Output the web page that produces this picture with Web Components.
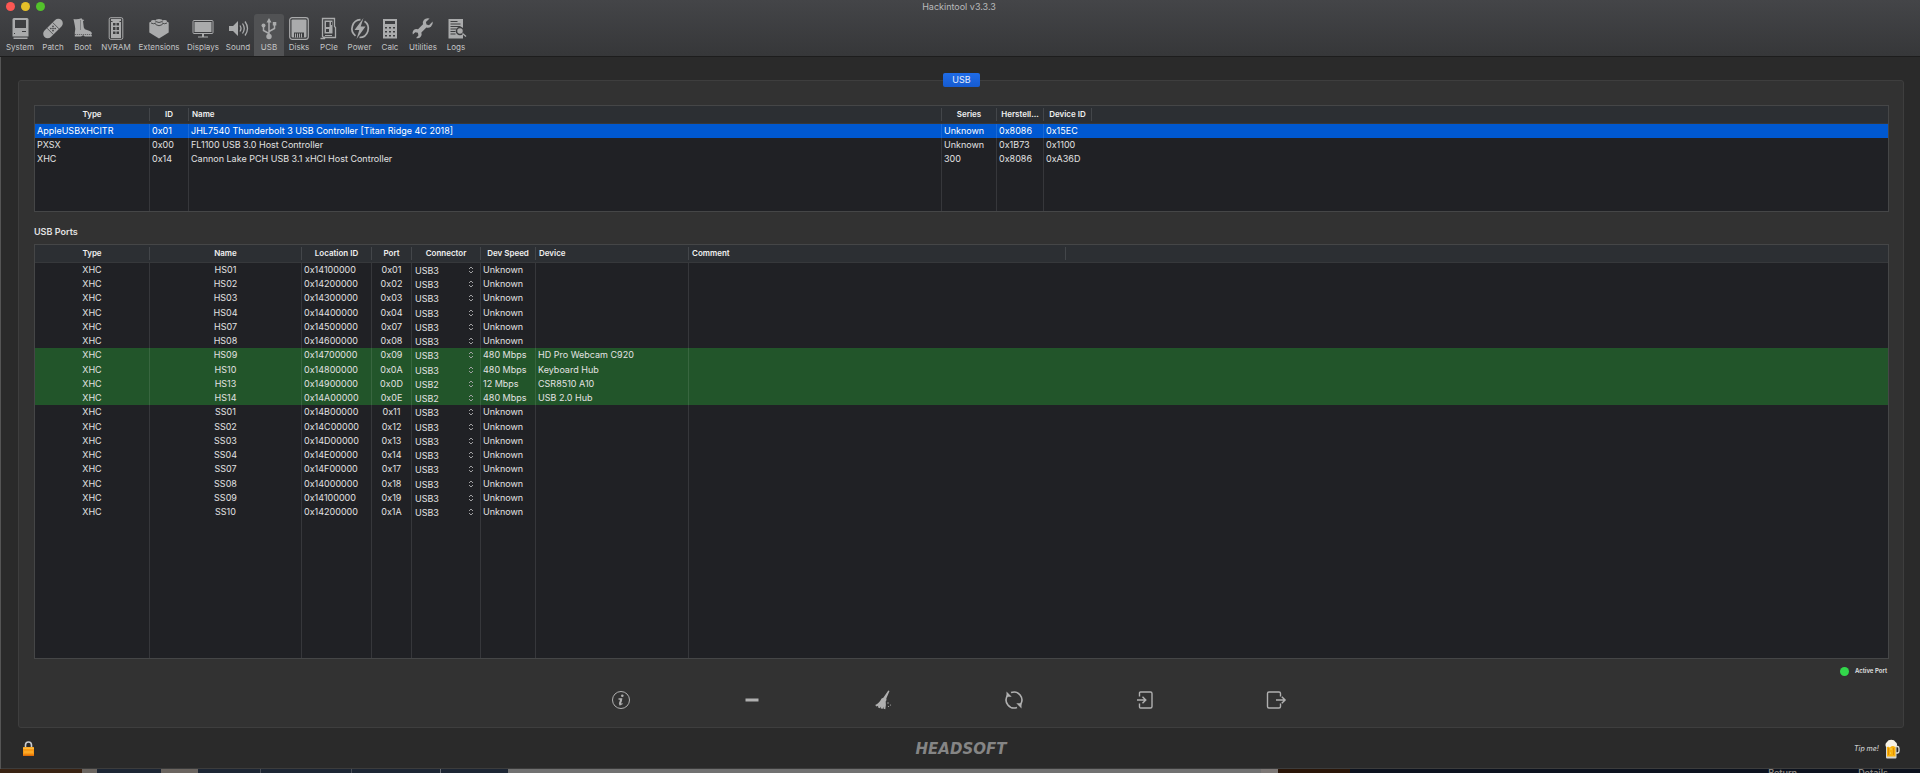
<!DOCTYPE html>
<html lang="en">
<head>
<meta charset="utf-8">
<title>Hackintool v3.3.3</title>
<style>
html, body { height: 100%; margin: 0; }
body {
  background: #0c121e;
  color: #e2e2e2;
  font: 9px/14px Inter, "Liberation Sans", sans-serif;
  overflow: hidden;
}
</style>
</head>
<body>
<hack-window></hack-window>
<script>
const ICONS = {
  system: `<path fill="currentColor" fill-rule="evenodd" d="M6 1h13q1.500 0 1.500 1.500V19.500h-16V2.500Q4.500 1 6 1zM7 3v8h11V3zM14 14v1h4v-1zM6 16v1h1v-1z"/><path fill="currentColor" d="M5.500 20.500h14v1.500h-14z"/>`,
  patch: `<g transform="rotate(-45 12 11.500)"><rect x="0" y="7" width="24" height="9" rx="4.500" fill="currentColor"/><path stroke="#3d3e40" stroke-width=".7" d="M8 7v9M16 7v9"/><g fill="#3d3e40"><circle cx="10.500" cy="10" r=".8"/><circle cx="13.500" cy="10" r=".8"/><circle cx="12" cy="11.500" r=".8"/><circle cx="10.500" cy="13" r=".8"/><circle cx="13.500" cy="13" r=".8"/></g></g>`,
  boot: `<path fill="currentColor" d="M2.500 2q4 .8 8-.8l.8 1.300 2 .6-1.300 1.200.8 6.200q.5 2 3.200 2.600 4.800 1.100 4.800 3.400v3h-7l-1.500-1.200-2.300 1.200H3.800v-4q1-3.500 0-7z"/><path stroke="#3d3e40" stroke-width=".8" stroke-dasharray="1 1" d="M9.500 3.500v9M3.800 17.500h17"/>`,
  nvram: `<rect x="5.200" y=".7" width="13.600" height="21.600" rx="1.500" fill="none" stroke="currentColor" stroke-width="1"/><path fill="currentColor" d="M7 2h10v19H7z"/><path fill="#3d3e40" d="M9 6h2.500v2.500H9zM12.500 6H15v2.500h-2.500zM9 10h2.500v3H9zM12.500 10H15v3h-2.500zM9 14.500h2.500V17H9zM12.500 14.500H15V17h-2.500zM7 4h1.500v1H7zM15.500 4H17v1h-1.500z"/>`,
  extensions: `<path fill="currentColor" d="M2.300 5.500 5 4.300h14l2.700 1.200V15.500L12 21.500 2.300 15.500z"/><ellipse cx="12" cy="3.500" rx="3.500" ry="1.600" fill="currentColor"/><ellipse cx="6.500" cy="4.500" rx="2.500" ry="1.400" fill="currentColor"/><ellipse cx="17.500" cy="4.500" rx="2.500" ry="1.400" fill="currentColor"/><path fill="none" stroke="#3d3e40" stroke-width=".9" d="M8.500 4.500q3.500 2 7 0M4 6q2.500 1.500 5 0M15 6q2.500 1.500 5 0M8.500 7.500q3.500 2.500 7 0"/>`,
  displays: `<rect x="2" y="3.500" width="20" height="13" rx="1" fill="none" stroke="currentColor"/><path fill="currentColor" d="M3.500 5h17v10h-17zM11 17h2v2.500h-2zM7 19.500h10v1H7z"/>`,
  sound: `<path fill="currentColor" d="M3 9h4l5-5v15l-5-5H3z"/><g fill="none" stroke="currentColor" stroke-width="1.300"><path d="M14 8.500q2 3 0 6M16.500 6.500q3.500 5 0 10M19 4.500q5 7 0 14"/></g>`,
  usb: `<g fill="none" stroke="currentColor" stroke-width="1.500"><path d="M12 4v15M12 16.500l-5.500-3V9M12 14.500l5.500-3V7"/></g><path fill="currentColor" d="m12 1 2.500 4.500h-5zM15.800 5h3.500v3.500h-3.500z"/><circle cx="12" cy="19.500" r="2.700" fill="currentColor"/><circle cx="6.500" cy="8.500" r="2" fill="currentColor"/>`,
  disks: `<rect x="2.700" y=".7" width="18.600" height="21.600" rx="2.500" fill="none" stroke="currentColor" stroke-width="1.200"/><rect x="4.500" y="2.500" width="15" height="18" rx="1" fill="currentColor"/><path fill="#3d3e40" d="M7 15.500h10v5H7z"/><path stroke="currentColor" d="M8.500 16.500v4M10.500 16.500v4M12.500 16.500v4M14.500 16.500v4"/>`,
  pcie: `<path fill="none" stroke="currentColor" stroke-width="1.300" d="M5.500 19.500V1.500h12v8l1 1v10H7zM3.500 21.500h4v-2"/><path fill="currentColor" fill-rule="evenodd" d="M7.500 3.500h8v13h-8zM9 5v5h3.500V5zM14 5v3h1V5zM9 12v3h3v-3z"/><path fill="currentColor" d="M8 18h7v1H8z"/>`,
  power: `<path fill="none" stroke="currentColor" stroke-width="1.700" d="M12.500 2.700A9 9 0 0 0 7.500 18.800M11.500 20.500A9 9 0 0 0 16.500 4.200"/><path fill="currentColor" d="M15.500 1 6.500 13h4.800L8.500 22l9-12.500h-4.800z"/>`,
  calc: `<path fill="currentColor" fill-rule="evenodd" d="M5 2h14v19.500H5zM7 4v3h10V4z"/><g fill="#3d3e40"><path d="M7 10h2v1.500H7zM11 10h2v1.500h-2zM15 10h2v1.500h-2zM7 14h2v1.500H7zM11 14h2v1.500h-2zM15 14h2v1.500h-2zM7 18h2v1.500H7zM11 18h2v1.500h-2zM15 18h2v1.500h-2z"/></g>`,
  utilities: `<path fill="currentColor" d="M21.700 4.500 18 8.200l-2.500-.7-.6-2.400 3.700-3.600q-3.500-1-5.600 1.200-1.800 2-1 4.600L7 12.200q-2.600-.9-4.500 1Q1 15 1.800 17.500l2.500-2.300 2.600.6.5 2.600-2.300 2.500q2.600.8 4.400-1 1.800-1.900.9-4.300l5-5q2.500.8 4.500-.9 2.400-2.200 1.800-5.200z"/>`,
  logs: `<path fill="currentColor" fill-rule="evenodd" d="M4.500 2h14.500v19.500h-14.500zM6.500 4v1h7V4zM6.500 6.500v1h10v-1zM6.500 9v1h10V9zM6.500 11.500v1h6v-1zM6.500 14v1h5v-1zM6.500 16.500v1h5v-1z"/><circle cx="16" cy="14" r="3.500" fill="#aaa" stroke="#3d3e40" stroke-width="1.500"/><path stroke="currentColor" stroke-width="1.300" d="m18.500 16.500 3.500 3"/>`,
  info: `<circle cx="12" cy="12" r="8.500" fill="none" stroke="currentColor"/><circle cx="13.300" cy="7.700" r="1.300" fill="currentColor"/><path fill="none" stroke="currentColor" stroke-width="1.300" d="M9.500 11h3l-1.700 5.300q-.3 1.200 2.700-.8"/><path stroke="currentColor" stroke-width="2" d="m12.300 11-1.500 5"/>`,
  minus: `<rect x="5.500" y="10.500" width="13" height="3" fill="currentColor"/>`,
  broom: `<path fill="currentColor" d="m17.300 2.500 1.200.6-3.200 7.400.2 1.500-.8 1.500q.6 4-.4 7.700l-1.800-.4.200-2-1 2-2-.2.400-2-1.300 1.600-2-1 .6-1.500-2 .7-1.200-1.500q4-1.700 6.400-6.500l1.700-.6z"/><g fill="currentColor"><circle cx="17" cy="15" r=".7"/><circle cx="19.500" cy="17" r=".6"/><circle cx="17.500" cy="18.500" r=".6"/></g>`,
  refresh: `<g fill="none" stroke="currentColor" stroke-width="1.600"><path d="M9 4.600A8 8 0 0 1 18.500 16.500M15 19.400A8 8 0 0 1 5.500 7.500"/></g><path fill="currentColor" d="M4.500 3.500v5.200h5.200zM19.500 20.500v-5.200h-5.200z"/>`,
  import: `<g fill="none" stroke="currentColor" stroke-width="1.400"><path d="M6.500 8.500V5Q6.500 4 7.500 4h10q1.500 0 1.500 1.500v13q0 1.500-1.500 1.500h-10q-1 0-1-1v-3.500M4 12h8.500M9.500 8.700l3.300 3.300-3.300 3.300"/></g>`,
  export: `<g fill="none" stroke="currentColor" stroke-width="1.400"><path d="M16.500 8.500V5.500Q16.500 4 15 4H5Q3.500 4 3.500 5.500v13Q3.500 20 5 20h10q1.500 0 1.500-1.500v-3M12 12h9M17.800 8.700l3.300 3.300-3.300 3.300"/></g>`
};
const svg = (name, size = 24) => `<svg width="${size}" height="${size}" viewBox="0 0 24 24" aria-hidden="true">${ICONS[name]}</svg>`;

class ToolItem extends HTMLElement {
  connectedCallback() {
    const shadow = this.attachShadow({ mode: 'open' });
    shadow.innerHTML = `<style>
:host { display: block; }
button {
  display: flex; flex-direction: column; align-items: center; gap: 1px;
  width: 100%; height: 100%; padding: 3px 0 0; border: 0; border-radius: 3px 3px 0 0;
  background: none; color: #aaabac; font: inherit; font-size: 8px; line-height: 10px;
  white-space: nowrap;
}
:host([selected]) button { background: #515254; }
span { color: #c4c5c6; }
</style><button type="button">${svg(this.getAttribute('icon'))}<span><slot></slot></span></button>`;
  }
}

class TitleBar extends HTMLElement {
  connectedCallback() {
    const shadow = this.attachShadow({ mode: 'open' });
    shadow.innerHTML = `<style>
:host {
  display: block; height: 56px; border-bottom: 1px solid #1d1d1d;
  background: linear-gradient(#444548, #363739);
}
header { display: grid; grid-template-columns: 1fr auto 1fr; height: 14px; padding-right: 2px; }
.lights { display: flex; gap: 6px; padding: 2px 6px; }
.lights button { width: 9px; height: 9px; padding: 0; border: 0; border-radius: 50%; }
.close { background: #fc5753; }
.min { background: #e5bf29; }
.max { background: #53c22b; }
h1 { margin: 0; font-size: 9px; font-weight: 400; line-height: 14px; color: #b9babb; }
nav {
  display: grid; height: 42px; padding-left: 2px;
  grid-template-columns: 36px 30px 30px 36px 50px 38px 32px 30px 30px 30px 31px 30px 36px 30px;
}
</style>
<header>
  <div class="lights">
    <button type="button" class="close" aria-label="Close"></button>
    <button type="button" class="min" aria-label="Minimize"></button>
    <button type="button" class="max" aria-label="Zoom"></button>
  </div>
  <h1>Hackintool v3.3.3</h1>
</header>
<nav>
  <tool-item icon="system">System</tool-item>
  <tool-item icon="patch">Patch</tool-item>
  <tool-item icon="boot">Boot</tool-item>
  <tool-item icon="nvram">NVRAM</tool-item>
  <tool-item icon="extensions">Extensions</tool-item>
  <tool-item icon="displays">Displays</tool-item>
  <tool-item icon="sound">Sound</tool-item>
  <tool-item icon="usb" selected>USB</tool-item>
  <tool-item icon="disks">Disks</tool-item>
  <tool-item icon="pcie">PCIe</tool-item>
  <tool-item icon="power">Power</tool-item>
  <tool-item icon="calc">Calc</tool-item>
  <tool-item icon="utilities">Utilities</tool-item>
  <tool-item icon="logs">Logs</tool-item>
</nav>`;
  }
}

// Base for both lists. Subclasses give columns as [title, width, header align, cell align].
// A width of 0 takes what is left, an empty title is the spare column at the end.
class DataTable extends HTMLElement {
  get columns() { return [] }
  get rows() { return [] }
  rowClass(row) { return '' }
  cell(value, column) { return value }
  connectedCallback() {
    const shadow = this.attachShadow({ mode: 'open' });
    const cols = this.columns.map(c => `<col${c[1] ? ` style="width:${c[1]}px"` : ''}>`).join('');
    const head = this.columns.map(c => c[0] ? `<th scope="col" class="${c[2]}"><div>${c[0]}</div></th>` : '<td></td>').join('');
    const body = this.rows.map(r => `<tr class="${this.rowClass(r)}">${this.columns.map((c, i) =>
      `<td class="${c[3] || ''}">${this.cell(r[i] || '', c[0])}</td>`).join('')}</tr>`).join('');
    const filler = `<tr class="filler">${this.columns.map(() => '<td></td>').join('')}</tr>`;
    shadow.innerHTML = `<style>
:host { display: grid; border: 1px solid #454647; background: #202125; }
table { width: 100%; height: 100%; border-collapse: separate; border-spacing: 0; table-layout: fixed; }
thead tr { height: 18px; background: #2c2f33; }
th, thead td { padding: 0; border-bottom: 1px solid #36383b; }
th div {
  height: 13px; padding: 0 3px; border-right: 1px solid #43464a;
  font-size: 8px; font-weight: 600; line-height: 13px; color: #f0f0f0;
  overflow: hidden; white-space: nowrap;
}
tbody tr { height: 14px; }
tbody tr:nth-child(4n) { height: 15px; }
tbody td { padding: 0 2px; border-right: 1px solid rgba(255,255,255,.1); line-height: 14px; white-space: nowrap; }
tbody td:last-child, tbody td:nth-last-child(2) { border-right: 0; }
tbody tr.filler { height: auto; }
.left { text-align: left; }
.center { text-align: center; }
.selected { background: #0058d0; color: #fff; }
.active { background: #22552a; }
.pop { display: flex; align-items: center; padding: 0 4px 0 0; height: 14px; }
select {
  flex: 1; min-width: 0; height: 14px; margin: 0; padding: 2px 0 0 1px; border: 0;
  appearance: none; background: none; color: inherit; font: inherit; line-height: 12px;
}
</style><table><colgroup>${cols}</colgroup><thead><tr>${head}</tr></thead><tbody>${body}${filler}</tbody></table>`;
  }
}

class ControllerTable extends DataTable {
  get columns() {
    return [
      ['Type', 115, 'center', 'left'],
      ['ID', 39, 'center', 'left'],
      ['Name', 753, 'left', 'left'],
      ['Series', 55, 'center', 'left'],
      ['Herstell...', 47, 'center', 'left'],
      ['Device ID', 48, 'center', 'left'],
      ['', 0]
    ];
  }
  get rows() {
    return [
      ['AppleUSBXHCITR', '0x01', 'JHL7540 Thunderbolt 3 USB Controller [Titan Ridge 4C 2018]', 'Unknown', '0x8086', '0x15EC'],
      ['PXSX', '0x00', 'FL1100 USB 3.0 Host Controller', 'Unknown', '0x1B73', '0x1100'],
      ['XHC', '0x14', 'Cannon Lake PCH USB 3.1 xHCI Host Controller', '300', '0x8086', '0xA36D']
    ];
  }
  rowClass(row) { return row[0] === 'AppleUSBXHCITR' ? 'selected' : '' }
}

class PortTable extends DataTable {
  get columns() {
    return [
      ['Type', 115, 'center', 'center'],
      ['Name', 152, 'center', 'center'],
      ['Location ID', 70, 'center', 'left'],
      ['Port', 40, 'center', 'center'],
      ['Connector', 69, 'center', 'left'],
      ['Dev Speed', 55, 'center', 'left'],
      ['Device', 153, 'left', 'left'],
      ['Comment', 377, 'left', 'left'],
      ['', 0]
    ];
  }
  get rows() {
    return [
      ['HS01', '0x14100000', '0x01', 'USB3', 'Unknown'],
      ['HS02', '0x14200000', '0x02', 'USB3', 'Unknown'],
      ['HS03', '0x14300000', '0x03', 'USB3', 'Unknown'],
      ['HS04', '0x14400000', '0x04', 'USB3', 'Unknown'],
      ['HS07', '0x14500000', '0x07', 'USB3', 'Unknown'],
      ['HS08', '0x14600000', '0x08', 'USB3', 'Unknown'],
      ['HS09', '0x14700000', '0x09', 'USB3', '480 Mbps', 'HD Pro Webcam C920'],
      ['HS10', '0x14800000', '0x0A', 'USB3', '480 Mbps', 'Keyboard Hub'],
      ['HS13', '0x14900000', '0x0D', 'USB2', '12 Mbps', 'CSR8510 A10'],
      ['HS14', '0x14A00000', '0x0E', 'USB2', '480 Mbps', 'USB 2.0 Hub'],
      ['SS01', '0x14B00000', '0x11', 'USB3', 'Unknown'],
      ['SS02', '0x14C00000', '0x12', 'USB3', 'Unknown'],
      ['SS03', '0x14D00000', '0x13', 'USB3', 'Unknown'],
      ['SS04', '0x14E00000', '0x14', 'USB3', 'Unknown'],
      ['SS07', '0x14F00000', '0x17', 'USB3', 'Unknown'],
      ['SS08', '0x14000000', '0x18', 'USB3', 'Unknown'],
      ['SS09', '0x14100000', '0x19', 'USB3', 'Unknown'],
      ['SS10', '0x14200000', '0x1A', 'USB3', 'Unknown']
    ].map(r => ['XHC', ...r]);
  }
  rowClass(row) { return row[6] ? 'active' : '' }
  cell(value, column) {
    if (column !== 'Connector' || !value) { return value }
    return `<label class="pop"><select aria-label="Connector"><option>${value}</option></select><svg width="6" height="8" viewBox="0 0 6 8" fill="none" stroke="#a0a0a2"><path d="m1 3 2-2 2 2M1 5l2 2 2-2"/></svg></label>`;
  }
}

class ActionBar extends HTMLElement {
  connectedCallback() {
    const shadow = this.attachShadow({ mode: 'open' });
    const actions = [['info', 'Info'], ['minus', 'Remove'], ['broom', 'Clear'], ['refresh', 'Refresh'], ['import', 'Import'], ['export', 'Export']];
    shadow.innerHTML = `<style>
:host { display: grid; grid-template-columns: repeat(6, 131px); justify-content: center; justify-items: center; padding-right: 26px; }
button { display: flex; padding: 0; border: 0; background: none; color: #b0b0b0; }
</style>${actions.map(a => `<button type="button" aria-label="${a[1]}">${svg(a[0])}</button>`).join('')}`;
  }
}

class StatusBar extends HTMLElement {
  connectedCallback() {
    const shadow = this.attachShadow({ mode: 'open' });
    shadow.innerHTML = `<style>
:host { display: grid; grid-template-columns: 1fr auto 1fr; align-items: center; height: 41px; padding: 0 20px 0 22px; }
button { display: flex; padding: 0; border: 0; background: none; }
.logo { font: italic bold 15px/16px "DejaVu Sans", sans-serif; color: #858585; }
.tip { display: flex; justify-content: flex-end; align-items: center; gap: 6px; }
a { color: #c8c8c8; font-size: 7px; font-style: italic; font-weight: 500; text-decoration: none; }
</style>
<button type="button" aria-label="Lock"><svg width="13" height="18" viewBox="0 0 13 18">
  <path d="M3.500 8V5a3 3 0 0 1 6 0v3" fill="none" stroke="#c9ccd0" stroke-width="1.600"/>
  <rect x="1" y="7" width="11" height="9" rx="1" fill="#f99a16"/>
  <path d="M1 7.500h11V9H1zM2 11.500h9v1H2z" fill="#ffb93b"/><path d="M1 14.500h11V16H1z" fill="#e06e08"/>
</svg></button>
<div class="logo">HEADSOFT</div>
<div class="tip"><a href="#tip">Tip me!</a><svg width="15" height="20" viewBox="0 0 15 20">
  <path d="M11 7.500h1.500q1.500 0 1.500 2v2.500q0 2-1.500 2H11" fill="none" stroke="#e3e6e6" stroke-width="1.300"/>
  <rect x="1" y="5" width="10.500" height="14.500" rx="1" fill="#d5d6d2"/>
  <rect x="2" y="6" width="8.500" height="11.500" fill="#f9b20d"/>
  <path d="M3.500 9v7M8.500 9v7" stroke="#e08f05"/><circle cx="6" cy="10" r=".7" fill="#ffe27a"/><circle cx="5.500" cy="14" r=".6" fill="#ffe27a"/>
  <path d="M1 8q-1.500-3.500 1-5Q3 .8 6.200.7q3.300 0 4.300 2.300 2.400 1.500 1 4.300-1.200 1-2.500 0-1.500-.8-3 .2-1.200 2-2.200.3z" fill="#f8f3e7"/>
</svg></div>`;
  }
}

// What shows of the windows below this one
class DesktopStrip extends HTMLElement {
  connectedCallback() {
    const shadow = this.attachShadow({ mode: 'open' });
    shadow.innerHTML = `<style>
:host {
  display: flex; justify-content: flex-end; gap: 61px; height: 4px; overflow: hidden; padding-right: 32px;
  color: #8b8680; font-size: 9px; font-weight: 600; line-height: 8px;
  background: linear-gradient(90deg, #3a2313 82px, #6b6560 82px 97px, #1d2634 97px 161px, #6b6560 161px 198px,
    #1d2634 198px 260px, #4a4f58 260px 261px, #1d2634 261px 351px, #4a4f58 351px 352px, #1d2634 352px 440px,
    #6b6f76 440px 441px, #1d2634 441px 508px, #717171 508px 1261px, #7d7876 1261px 1278px, #2a1608 1278px 1350px, #0c121e 1350px);
}
</style><span>Return</span><span>Details</span>`;
  }
}

class HackWindow extends HTMLElement {
  connectedCallback() {
    const shadow = this.attachShadow({ mode: 'open' });
    shadow.innerHTML = `<style>
:host { display: flex; flex-direction: column; height: 100vh; }
.window {
  flex: 1; min-height: 0; display: flex; flex-direction: column;
  background: #2a2a2a; box-shadow: inset 1px 0 #555, inset 0 -1px #3c3c3c;
}
.panel {
  flex: 1; min-height: 0; display: flex; flex-direction: column;
  margin: 23px 16px 0 18px; padding: 0 14px 15px 15px;
  background: #323232; border: 1px solid #3e3e3e; border-radius: 3px;
}
.tab {
  align-self: center; width: 37px; height: 14px; margin: -8px 0 18px; padding: 0; border: 0; border-radius: 2px;
  background: linear-gradient(#1f6ce8, #165bd0); color: #e6eefc; font: inherit; line-height: 14px;
}
controller-table { height: 105px; }
h2 { margin: 13px 0 5px; font-size: 9px; font-weight: 600; line-height: 14px; }
port-table { flex: 1; }
.legend { display: flex; justify-content: flex-end; align-items: center; gap: 6px; height: 12px; margin: 6px 2px 11px 0; font-size: 6px; font-weight: 600; }
.legend i { width: 9px; height: 9px; border-radius: 50%; background: #32d74b; }
</style>
<div class="window">
  <title-bar></title-bar>
  <main class="panel">
    <button type="button" class="tab">USB</button>
    <controller-table></controller-table>
    <h2>USB Ports</h2>
    <port-table></port-table>
    <div class="legend"><i></i><span>Active Port</span></div>
    <action-bar></action-bar>
  </main>
  <status-bar></status-bar>
</div>
<desktop-strip></desktop-strip>`;
  }
}

customElements.define('tool-item', ToolItem);
customElements.define('title-bar', TitleBar);
customElements.define('controller-table', ControllerTable);
customElements.define('port-table', PortTable);
customElements.define('action-bar', ActionBar);
customElements.define('status-bar', StatusBar);
customElements.define('desktop-strip', DesktopStrip);
customElements.define('hack-window', HackWindow);
</script>
</body>
</html>
